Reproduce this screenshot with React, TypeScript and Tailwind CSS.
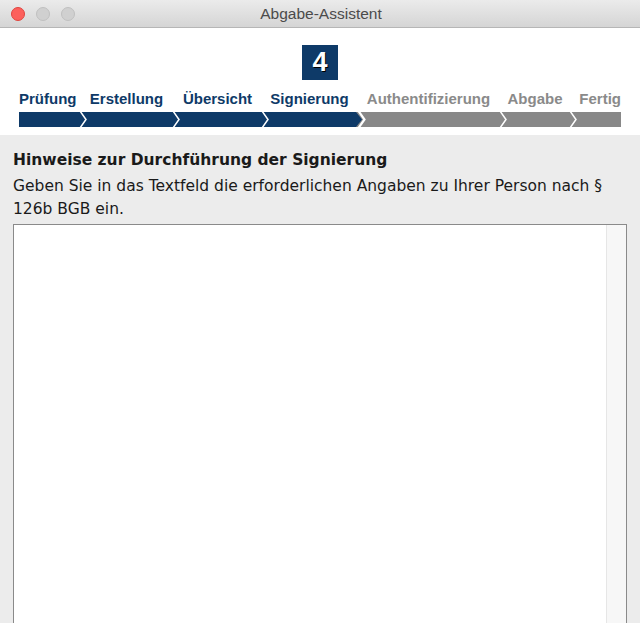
import React from "react";

const steps = [
  { label: "Prüfung", w: 61, done: true, align: "justify-start" },
  { label: "Erstellung", w: 93, done: true, align: "justify-center" },
  { label: "Übersicht", w: 89, done: true, align: "justify-center" },
  { label: "Signierung", w: 95, done: true, align: "justify-center" },
  { label: "Authentifizierung", w: 143, done: false, align: "justify-center" },
  { label: "Abgabe", w: 70, done: false, align: "justify-center" },
  { label: "Fertig", w: 51, done: false, align: "justify-end" },
];

const BLUE = "#0e3a68";
const GREY = "#888888";

function ProgressBar() {
  // boundaries between segments, relative to bar start
  const bounds: number[] = [];
  let x = 0;
  steps.forEach((s, i) => {
    x += s.w;
    if (i < steps.length - 1) bounds.push(x);
  });
  const activeEnd = steps.filter((s) => s.done).reduce((a, s) => a + s.w, 0);

  return (
    <svg width={602} height={15} viewBox="0 0 602 15" className="block">
      <rect x={0} y={0} width={602} height={15} fill={GREY} />
      <polygon points={`0,0 ${activeEnd - 1},0 ${activeEnd + 5},7.5 ${activeEnd - 1},15 0,15`} fill={BLUE} />
      {bounds.map((b) => (
        <polyline
          key={b}
          points={`${b},-1 ${b + 6},7.5 ${b},16`}
          fill="none"
          stroke="#ffffff"
          strokeWidth={b === activeEnd ? 2.2 : 1.5}
          transform={b === activeEnd ? "translate(1.5,0)" : undefined}
        />
      ))}
    </svg>
  );
}

export default function App() {
  return (
    <div className="h-[623px] w-[640px] overflow-hidden flex flex-col bg-[#ececec]" style={{ fontFamily: '"Lucida Grande", "DejaVu Sans", sans-serif' }}>
      {/* title bar */}
      <div className="relative h-[28px] shrink-0 flex items-center justify-center bg-gradient-to-b from-[#ebebeb] to-[#d5d5d5] border-b border-[#b6b6b6]">
        <div className="absolute left-[11px] top-[7px] flex gap-[11px]">
          <span className="w-[14px] h-[14px] rounded-full bg-[#fc605c] border border-[#e0443e]" />
          <span className="w-[14px] h-[14px] rounded-full bg-[#d0d0d0] border border-[#c0c0c0]" />
          <span className="w-[14px] h-[14px] rounded-full bg-[#d0d0d0] border border-[#c0c0c0]" />
        </div>
        <span className="text-[15.5px] text-[#4b4b4b] ml-[2px]" style={{ fontFamily: '"Liberation Sans", Arial, sans-serif' }}>Abgabe-Assistent</span>
      </div>

      {/* wizard header */}
      <div className="bg-white h-[107px] shrink-0 flex flex-col items-center pt-[17px]" style={{ fontFamily: '"Liberation Sans", Arial, sans-serif' }}>
        <div className="w-[36px] h-[35px] bg-[#0e3a68] flex items-center justify-center text-white font-bold text-[27px] leading-none [text-shadow:1px_1px_0_#000]">
          4
        </div>
        <div className="mt-[10px] w-[602px] flex">
          {steps.map((s) => (
            <div key={s.label} className={`flex ${s.align}`} style={{ width: s.w }}>
              <span className={`text-[15px] font-bold leading-[18px] whitespace-nowrap ${s.done ? "text-[#0e3a68]" : "text-[#8a8a8a]"}`}>
                {s.label}
              </span>
            </div>
          ))}
        </div>
        <div className="mt-[4px]">
          <ProgressBar />
        </div>
      </div>

      {/* content */}
      <div className="flex-1 flex flex-col px-[13px] pt-[15px] text-[#1a1a1a]">
        <h2 className="text-[15.5px] font-bold leading-[20px]">Hinweise zur Durchführung der Signierung</h2>
        <p className="mt-[5px] text-[15.5px] leading-[23px] w-[614px]">
          Geben Sie in das Textfeld die erforderlichen Angaben zu Ihrer Person nach § 126b BGB ein.
        </p>
        <div className="mt-[3px] w-[614px] flex-1 flex border border-[#8a8a8a] border-b-0 bg-white">
          <div className="flex-1" />
          <div className="w-[20px] bg-[#f7f7f7] border-l border-[#e6e6e6]" />
        </div>
      </div>
    </div>
  );
}
